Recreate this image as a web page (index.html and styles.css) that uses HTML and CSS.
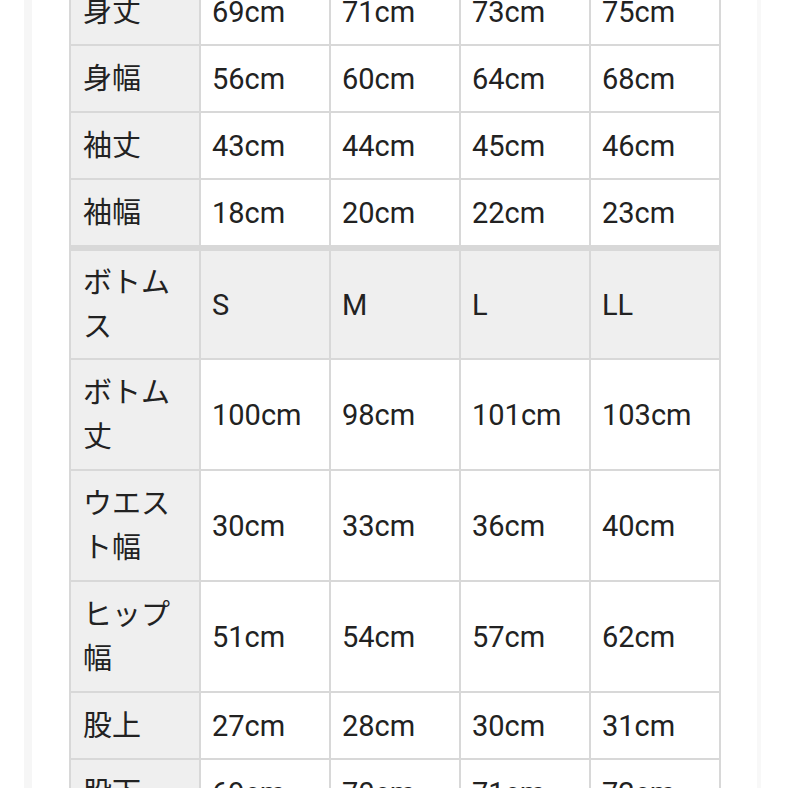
FILE: index.html
```html
<!DOCTYPE html>
<html lang="ja">
<head>
<meta charset="utf-8">
<title>サイズ表</title>
<link rel="stylesheet" href="styles.css">
</head>
<body>
<div class="page">
  <table class="size-table">
    <colgroup>
      <col class="c"><col class="c"><col class="c"><col class="c"><col class="c">
    </colgroup>
    <tbody>
      <tr><th>身丈</th><td>69cm</td><td>71cm</td><td>73cm</td><td>75cm</td></tr>
      <tr><th>身幅</th><td>56cm</td><td>60cm</td><td>64cm</td><td>68cm</td></tr>
      <tr><th>袖丈</th><td>43cm</td><td>44cm</td><td>45cm</td><td>46cm</td></tr>
      <tr><th>袖幅</th><td>18cm</td><td>20cm</td><td>22cm</td><td>23cm</td></tr>
      <tr class="section"><th>ボトムス</th><td>S</td><td>M</td><td>L</td><td>LL</td></tr>
      <tr><th>ボトム丈</th><td>100cm</td><td>98cm</td><td>101cm</td><td>103cm</td></tr>
      <tr><th>ウエスト幅</th><td>30cm</td><td>33cm</td><td>36cm</td><td>40cm</td></tr>
      <tr><th>ヒップ幅</th><td>51cm</td><td>54cm</td><td>57cm</td><td>62cm</td></tr>
      <tr><th>股上</th><td>27cm</td><td>28cm</td><td>30cm</td><td>31cm</td></tr>
      <tr><th>股下</th><td>69cm</td><td>70cm</td><td>71cm</td><td>72cm</td></tr>
    </tbody>
  </table>
</div>
</body>
</html>
```

FILE: styles.css
```css
html, body {
  margin: 0;
  padding: 0;
  background: #ffffff;
  overflow: hidden;
  height: 788px;
}

.page {
  margin-left: 24px;
  width: 725px;
  height: 788px;
  border-left: 8px solid #f6f6f6;
  border-right: 4px solid #f8f8f8;
  background: #ffffff;
  overflow: hidden;
}

.size-table {
  margin-top: -23px;
  margin-left: 37px;
  width: 651px;
  table-layout: fixed;
  border-collapse: collapse;
  font-family: Roboto, "Noto Sans CJK JP", sans-serif;
  font-size: 29px;
  color: #222222;
}

.size-table .c {
  width: 130px;
}

.size-table th,
.size-table td {
  border: 2px solid #d8d8d8;
  padding: 10.5px 11px 10.5px 12px;
  line-height: 44px;
  text-align: left;
  vertical-align: middle;
  font-weight: normal;
}

.size-table td {
  padding-left: 11px;
  background: #ffffff;
}

.size-table th {
  background: #efefef;
}

.size-table .section th,
.size-table .section td {
  border-top: 6px solid #d8d8d8;
  background: #efefef;
  padding-top: 9.5px;
  padding-bottom: 9.5px;
}
```
